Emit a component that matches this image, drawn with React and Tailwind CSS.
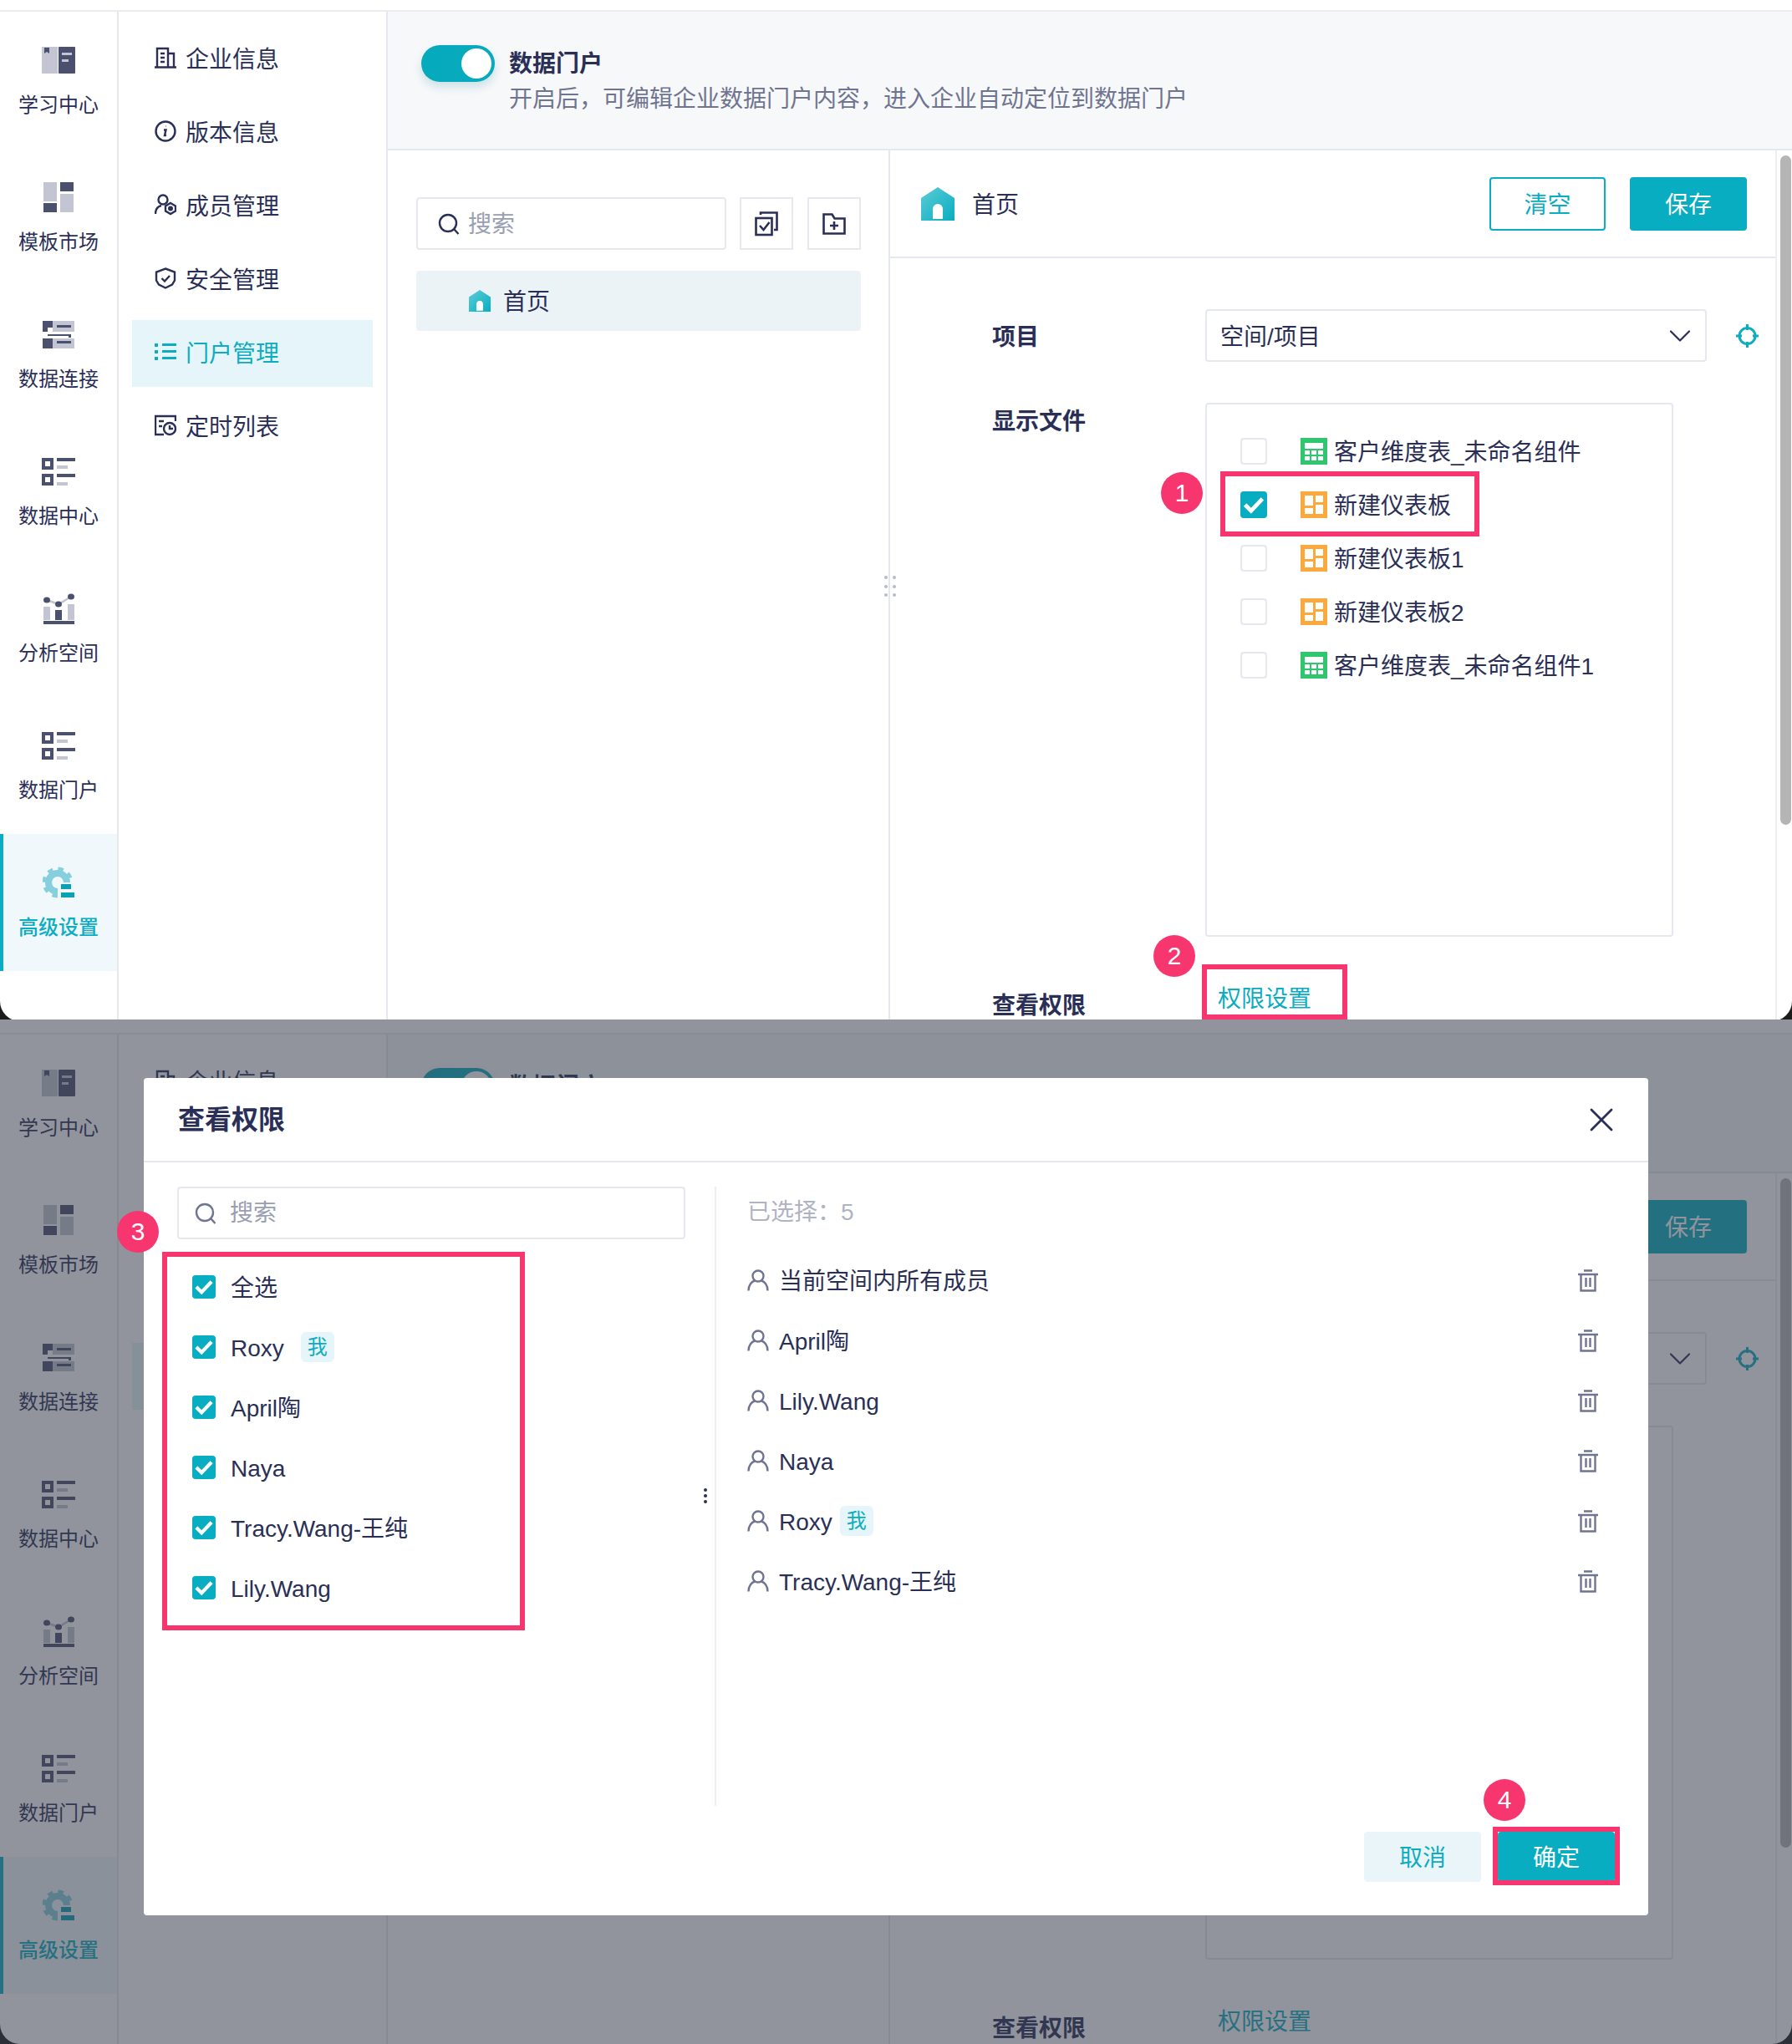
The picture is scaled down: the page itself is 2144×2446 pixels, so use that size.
import React from 'react';
import { ChevronDown, X } from 'lucide-react';

const DARK = '#4b506f';
const LIGHT = '#c3c6d2';
const INK = '#2a2f57';

const BookIcon = () => (
  <svg width="40" height="32" viewBox="0 0 40 32">
    <rect x="0" y="0" width="19" height="32" fill={LIGHT} />
    <path d="M3 1h6v7l-3-2-3 2z" fill={DARK} />
    <rect x="20" y="0" width="20" height="32" rx="1" fill={DARK} />
    <rect x="24" y="7" width="12" height="3" fill={LIGHT} />
    <rect x="24" y="15" width="8" height="3" fill={LIGHT} />
  </svg>
);

const TemplateIcon = () => (
  <svg width="36" height="36" viewBox="0 0 36 36">
    <rect x="0" y="0" width="16" height="23" fill={LIGHT} />
    <rect x="20" y="0" width="16" height="11" fill={DARK} />
    <rect x="0" y="25" width="16" height="11" fill={DARK} />
    <rect x="20" y="14" width="16" height="22" fill={LIGHT} />
  </svg>
);

const ConnectIcon = () => (
  <svg width="38" height="33" viewBox="0 0 38 33">
    <rect x="12" y="0" width="26" height="13" fill={LIGHT} />
    <rect x="12" y="21" width="26" height="12" fill={LIGHT} />
    <path d="M0 0h12v8H6v5H0zM0 21h12v12H0z" fill={DARK} />
    <rect x="17" y="5" width="17" height="3" fill={DARK} />
    <rect x="17" y="24" width="17" height="3" fill={DARK} />
    <path d="M6 16h28v4h-3v-2H6z" fill={DARK} />
  </svg>
);

const DataIcon = () => (
  <svg width="40" height="33" viewBox="0 0 40 33">
    <path fillRule="evenodd" d="M0 0h14v14H0zM4 4v6h6V4z" fill={DARK} />
    <path fillRule="evenodd" d="M0 19h14v14H0zM4 23v6h6v-6z" fill={DARK} />
    <rect x="18" y="0" width="22" height="4" fill={DARK} />
    <rect x="18" y="9" width="13" height="4" fill={LIGHT} />
    <rect x="18" y="19" width="22" height="4" fill={DARK} />
    <rect x="18" y="29" width="13" height="4" fill={LIGHT} />
  </svg>
);

const ChartIcon = () => (
  <svg width="37" height="37" viewBox="0 0 37 37">
    <rect x="0" y="16" width="8" height="16" fill={LIGHT} />
    <rect x="14" y="20" width="8" height="12" fill={DARK} />
    <rect x="29" y="13" width="8" height="19" fill={LIGHT} />
    <rect x="0" y="33" width="37" height="4" fill={DARK} />
    <path d="M4 8l14 5 15-9" stroke={LIGHT} strokeWidth="2.5" fill="none" />
    <ellipse cx="4" cy="8" rx="4" ry="3.5" fill={DARK} />
    <ellipse cx="18" cy="13" rx="4" ry="3.5" fill={DARK} />
    <ellipse cx="33" cy="4" rx="4" ry="3.5" fill={DARK} />
  </svg>
);

const GearIcon = ({ cut = '#f0f8fb' }) => (
  <svg width="38" height="38" viewBox="0 0 38 38">
    <circle cx="18" cy="19" r="11" stroke="#85d0dc" strokeWidth="8" fill="none" />
    <circle cx="18" cy="19" r="16.5" stroke="#85d0dc" strokeWidth="4" strokeDasharray="6.5 6.46" fill="none" />
    <rect x="18" y="19" width="20" height="19" fill={cut} />
    <rect x="22" y="21" width="12" height="6" fill="#0aa0b5" />
    <rect x="22" y="31" width="16" height="6" fill="#0aa0b5" />
  </svg>
);

const SvgBox = ({ children, color = INK }) => (
  <svg width="26" height="26" viewBox="0 0 26 26" fill="none" stroke={color} strokeWidth="2.4">
    {children}
  </svg>
);

const sideIcons = {
  company: (
    <SvgBox>
      <path d="M3 24V2h13v22M16 8h7v16M0 24.500h26M7 8h5M7 13h5M7 18h5" />
    </SvgBox>
  ),
  info: (
    <SvgBox>
      <circle cx="13" cy="13" r="11.5" />
      <path d="M11 11.5h2.5l-1.5 6.5h2M13.2 7h.4" strokeWidth="2.4" />
    </SvgBox>
  ),
  member: (
    <SvgBox>
      <circle cx="10" cy="7" r="5.5" />
      <path d="M1 24c0-6 3-9 7-10" />
      <path d="M19 11l6 3.500v6l-6 3.500-6-3.500v-6z" />
      <circle cx="19" cy="17.500" r="1.800" fill={INK} />
    </SvgBox>
  ),
  shield: (
    <SvgBox>
      <path d="M13 1.500l11 4v10l-3 5-8 4-8-4-3-5v-10z" />
      <path d="M8.500 13l3.500 3.500 6-6.500" />
    </SvgBox>
  ),
  list: (
    <svg width="26" height="22" viewBox="0 0 26 22" fill="#0cadc2">
      <rect x="0" y="1" width="4" height="4" />
      <rect x="0" y="9" width="4" height="4" />
      <rect x="0" y="17" width="4" height="4" />
      <rect x="9" y="1" width="17" height="3" />
      <rect x="9" y="9" width="17" height="3" />
      <rect x="9" y="17" width="17" height="3" />
    </svg>
  ),
  schedule: (
    <SvgBox>
      <path d="M11 24H1V2h24v6M5 8h6M5 14h4" />
      <circle cx="18" cy="17" r="7" />
      <path d="M18 13v4h4" />
    </SvgBox>
  ),
};

const navItems = [
  { label: '学习中心', icon: <BookIcon /> },
  { label: '模板市场', icon: <TemplateIcon /> },
  { label: '数据连接', icon: <ConnectIcon /> },
  { label: '数据中心', icon: <DataIcon /> },
  { label: '分析空间', icon: <ChartIcon /> },
  { label: '数据门户', icon: <DataIcon /> },
  { label: '高级设置', icon: <GearIcon />, active: true },
];

const sideItems = [
  { label: '企业信息', icon: 'company' },
  { label: '版本信息', icon: 'info' },
  { label: '成员管理', icon: 'member' },
  { label: '安全管理', icon: 'shield' },
  { label: '门户管理', icon: 'list', active: true },
  { label: '定时列表', icon: 'schedule' },
];

const files = [
  { name: '客户维度表_未命名组件', type: 'table' },
  { name: '新建仪表板', type: 'board', checked: true },
  { name: '新建仪表板1', type: 'board' },
  { name: '新建仪表板2', type: 'board' },
  { name: '客户维度表_未命名组件1', type: 'table' },
];

const members = ['Roxy', 'April陶', 'Naya', 'Tracy.Wang-王纯', 'Lily.Wang'];
const selected = ['当前空间内所有成员', 'April陶', 'Lily.Wang', 'Naya', 'Roxy', 'Tracy.Wang-王纯'];

const SearchIcon = ({ color = INK }) => (
  <svg width="26" height="26" viewBox="0 0 26 26" fill="none" stroke={color} strokeWidth="2.4">
    <circle cx="12" cy="12" r="10" />
    <path d="M19.500 19.500l5 5.500" />
  </svg>
);

const HouseIcon = ({ size }) => (
  <svg width={size} height={size} viewBox="0 0 40 40">
    <defs>
      <linearGradient id="house" x1="0" y1="0" x2="1" y2="1">
        <stop offset="0" stopColor="#5cccd6" />
        <stop offset="1" stopColor="#08adc1" />
      </linearGradient>
    </defs>
    <path d="M20 0l20 13v27H0V13z" fill="url(#house)" />
    <path d="M14 38V26a6 6 0 0 1 12 0v12z" fill="#fff" />
  </svg>
);

const TableIcon = () => (
  <svg width="32" height="32" viewBox="0 0 32 32">
    <rect width="32" height="32" fill="#2ec76f" />
    <rect x="5" y="6" width="22" height="7" fill="#fff" />
    <path d="M5 15h6v5H5zM13 15h6v5h-6zM21 15h6v5h-6zM5 22h6v5H5zM13 22h6v5h-6zM21 22h6v5h-6z" fill="#fff" />
  </svg>
);

const BoardIcon = () => (
  <svg width="32" height="32" viewBox="0 0 32 32">
    <rect width="32" height="32" fill="#fba93c" />
    <path d="M5 5h10v12H5zM18 5h9v8h-9zM5 20h10v7H5zM18 16h9v11h-9z" fill="#fff" />
  </svg>
);

const CheckMark = ({ size }) => (
  <svg width={size} height={size} viewBox="0 0 20 20" fill="none" stroke="#fff" strokeWidth="3">
    <path d="M3.500 10l4.500 4.500 8.500-9" />
  </svg>
);

const FileRow = ({ name, type, checked }) => (
  <div className="h-16 flex items-center pl-10">
    {checked ? (
      <span className="w-8 h-8 rounded bg-[#08adc1] flex items-center justify-center">
        <CheckMark size={32} />
      </span>
    ) : (
      <span className="w-8 h-8 rounded border-2 border-[#e6e8ef] bg-white" />
    )}
    <span className="ml-10 mr-2">{type === 'table' ? <TableIcon /> : <BoardIcon />}</span>
    <span className="mt-[3px] text-[28px] leading-10 text-[#2a2f57]">{name}</span>
  </div>
);

// the app behind both shots
const AppShell = () => (
  <div className="h-[1222px] flex flex-col bg-white rounded-b-[24px] overflow-hidden">
    <div className="h-[14px] shrink-0 border-b-2 border-[#ebecf0]" />
    <div className="flex flex-1 min-h-0">
      {/* Main nav */}
      <div className="w-[142px] shrink-0 border-r-2 border-[#e6e8ef]">
        {navItems.map((item) => (
          <div
            key={item.label}
            className={
              item.active
                ? 'h-[164px] pt-[36px] pr-1 flex flex-col items-center bg-[#f0f8fb] border-l-4 border-[#0cadc2]'
                : 'h-[164px] pt-[36px] flex flex-col items-center'
            }
          >
            <div className="h-11 flex items-center justify-center">{item.icon}</div>
            <div
              className={
                item.active
                  ? 'mt-4 text-2xl leading-8 font-medium text-[#0cadc2]'
                  : 'mt-4 text-2xl leading-8 text-[#2a2f57]'
              }
            >
              {item.label}
            </div>
          </div>
        ))}
      </div>

      {/* Settings menu */}
      <div className="w-[322px] shrink-0 border-r-2 border-[#e6e8ef] pt-[17px] px-4 flex flex-col gap-2">
        {sideItems.map((item) => (
          <div
            key={item.label}
            className={
              item.active
                ? 'h-20 pl-[27px] flex items-center gap-[11px] bg-[#e6f5f9] text-[#0cadc2]'
                : 'h-20 pl-[27px] flex items-center gap-[11px] text-[#2a2f57]'
            }
          >
            <span className="w-[26px] mb-1 flex justify-center">{sideIcons[item.icon]}</span>
            <span className="mt-0.5 text-[28px] leading-10">{item.label}</span>
          </div>
        ))}
      </div>

      <div className="flex-1 min-w-0 flex flex-col">
        {/* Portal switch */}
        <div className="h-[166px] shrink-0 bg-[#f7f8fa] border-b-2 border-[#e6e8ef] pl-10 pt-10 flex items-start gap-[17px]">
          <div className="w-[88px] h-11 rounded-full bg-gradient-to-r from-[#05aabd] to-[#0aa9bd] flex items-center justify-end pr-1 shadow-[0_6px_12px_rgba(8,120,140,0.18)]">
            <span className="w-9 h-9 rounded-full bg-white" />
          </div>
          <div className="pt-[3px]">
            <div className="text-[28px] leading-10 font-bold text-[#2a2f57]">数据门户</div>
            <div className="mt-0.5 text-[28px] leading-10 text-[#6f7590]">
              开启后，可编辑企业数据门户内容，进入企业自动定位到数据门户
            </div>
          </div>
        </div>

        <div className="flex flex-1 min-h-0">
          {/* Page tree */}
          <div className="w-[601px] shrink-0 border-r-2 border-[#e6e8ef] pl-[34px] pt-[56px]">
            <div className="flex">
              <div className="w-[371px] h-[63px] rounded border-2 border-[#e6e8ef] flex items-center pl-6 gap-[10px]">
                <SearchIcon />
                <span className="mt-0.5 text-[28px] leading-10 text-[#9a9eb3]">搜索</span>
              </div>
              <div className="ml-4 w-16 h-[63px] border-2 border-[#e6e8ef] flex items-center justify-center">
                <svg width="28" height="30" viewBox="0 0 28 30" fill="none" stroke={INK} strokeWidth="2.6">
                  <rect x="1.500" y="8" width="19" height="20" />
                  <path d="M7 4V1.500h19.500V22H23" />
                  <path d="M6 17l4.500 5 7-9" />
                </svg>
              </div>
              <div className="ml-[17px] w-16 h-[63px] border-2 border-[#e6e8ef] flex items-center justify-center">
                <svg width="28" height="26" viewBox="0 0 28 26" fill="none" stroke={INK} strokeWidth="2.6">
                  <path d="M1.500 24.500V1.500h10l3 5h12v18z" />
                  <path d="M14 10v10M9 15h10" />
                </svg>
              </div>
            </div>
            <div className="mt-[25px] w-[532px] h-[72px] rounded bg-[#ecf3f7] pl-[63px] flex items-center gap-[15px]">
              <HouseIcon size={26} />
              <span className="mt-[3px] text-[28px] leading-10 text-[#2a2f57]">首页</span>
            </div>
          </div>

          {/* Page settings */}
          <div className="flex-1 min-w-0 flex flex-col">
            <div className="h-[129px] shrink-0 border-b-2 border-[#e6e8ef] pl-[37px] pr-[34px] flex items-center">
              <HouseIcon size={40} />
              <span className="ml-[21px] mt-1 text-[28px] leading-10 text-[#2a2f57]">首页</span>
              <button className="ml-auto w-[139px] h-16 pt-1 rounded border-2 border-[#08adc1] text-[28px] text-[#0cadc2]">清空</button>
              <button className="ml-[29px] w-[140px] h-16 pt-1 rounded bg-[#08adc1] text-[28px] text-white">保存</button>
            </div>
            <div className="pl-[122px] pt-[61px]">
              <div className="flex items-center h-[63px]">
                <div className="w-[255px] mt-1 text-[28px] leading-10 font-bold text-[#2a2f57]">项目</div>
                <div className="w-[600px] h-[63px] rounded border-2 border-[#e6e8ef] pl-4 pr-2 flex items-center justify-between">
                  <span className="mt-1 text-[28px] leading-10 text-[#2a2f57]">空间/项目</span>
                  <ChevronDown size={44} strokeWidth={1.2} color={INK} />
                </div>
                <svg className="ml-[35px]" width="27" height="28" viewBox="0 0 27 28" fill="none" stroke="#0cadc2" strokeWidth="3">
                  <circle cx="13.500" cy="14" r="9.500" />
                  <path d="M13.500 0v7M13.500 21v7M0 14h7M20 14h7" />
                </svg>
              </div>
              <div className="flex mt-[49px]">
                <div className="w-[255px] pt-[3px] text-[28px] leading-10 font-bold text-[#2a2f57]">显示文件</div>
                <div className="w-[560px] h-[639px] rounded border-2 border-[#e6e8ef] pt-6">
                  {files.map((file) => (
                    <FileRow key={file.name} {...file} />
                  ))}
                </div>
              </div>
              <div className="flex mt-[63px]">
                <div className="w-[255px] text-[28px] leading-10 font-bold text-[#2a2f57]">查看权限</div>
                <div className="pl-[15px] -mt-2 text-[28px] leading-10 text-[#0cadc2]">权限设置</div>
              </div>
            </div>
          </div>

          {/* Scrollbar */}
          <div className="w-5 shrink-0 border-l-2 border-[#eeeff3] pl-1 pt-1.5">
            <div className="w-[13px] h-[801px] rounded-full bg-[#b5b5b5]" />
          </div>
        </div>
      </div>
    </div>

    {/* Pane resize handle */}
    <div className="absolute left-[1058px] top-[689px] w-[14px] h-7 grid grid-cols-2 gap-y-1 gap-x-1.5">
      {[0, 1, 2, 3, 4, 5].map((n) => (
        <span key={n} className="w-1 h-1 rounded-full bg-[#b8bbc9]" />
      ))}
    </div>
  </div>
);

const Badge = ({ n, className }) => (
  <div className={`absolute w-[50px] h-[50px] rounded-full bg-[#f7366f] text-white text-[30px] leading-[50px] text-center font-medium ${className}`}>
    {n}
  </div>
);

const Tag = () => (
  <span className="w-10 h-9 rounded-md bg-[#e6f5f9] text-2xl leading-9 text-center text-[#0cadc2]">我</span>
);

const PermissionModal = () => (
  <div className="absolute left-[172px] top-[70px] w-[1800px] h-[1002px] rounded bg-white flex flex-col">
    <div className="h-[101px] shrink-0 border-b-2 border-[#e6e8ef] pl-[41px] pr-8 flex items-center justify-between">
      <span className="text-[32px] leading-10 font-bold text-[#2a2f57]">查看权限</span>
      <X size={48} strokeWidth={1.4} color={INK} />
    </div>

    <div className="flex h-[741px] mt-[29px] shrink-0">
      <div className="w-[683px] shrink-0 pl-10 relative">
        <div className="w-[608px] h-[63px] rounded border-2 border-[#e6e8ef] flex items-center pl-[19px] gap-4">
          <SearchIcon color="#6f7590" />
          <span className="text-[28px] leading-10 text-[#9a9eb3]">搜索</span>
        </div>
        <div className="mt-[21px] pl-[18px]">
          <div className="h-[72px] flex items-center gap-[18px]">
            <span className="w-7 h-7 rounded bg-[#08adc1] flex items-center justify-center"><CheckMark size={28} /></span>
            <span className="mt-[3px] text-[28px] leading-10 text-[#2a2f57]">全选</span>
          </div>
          {members.map((name) => (
            <div key={name} className="h-[72px] flex items-center gap-[18px]">
              <span className="w-7 h-7 rounded bg-[#08adc1] flex items-center justify-center"><CheckMark size={28} /></span>
              <span className="mt-[3px] text-[28px] leading-10 text-[#2a2f57]">{name}</span>
              {name === 'Roxy' && <span className="ml-0.5 flex"><Tag /></span>}
            </div>
          ))}
        </div>
        <div className="absolute left-[670px] top-[361px] flex flex-col gap-[3px]">
          <span className="w-1 h-1 rounded-full bg-[#2a2f57]" />
          <span className="w-1 h-1 rounded-full bg-[#2a2f57]" />
          <span className="w-1 h-1 rounded-full bg-[#2a2f57]" />
        </div>
      </div>

      <div className="flex-1 min-w-0 border-l-2 border-[#eeeff3] pl-[37px] pr-[60px] pt-[11px]">
        <div className="text-[28px] leading-10 text-[#b0b3c3]">已选择：5</div>
        <div className="mt-[25px]">
          {selected.map((name) => (
            <div key={name} className="h-[72px] flex items-center">
              <svg className="mr-3" width="26" height="26" viewBox="0 0 26 26" fill="none" stroke="#6f7590" strokeWidth="2.4">
                <circle cx="13" cy="8" r="6.500" />
                <path d="M1.500 25.500c0-7 4-11 7.500-12M24.500 25.500c0-7-4-11-7.500-12" />
              </svg>
              <span className="mt-[3px] text-[28px] leading-10 text-[#2a2f57]">{name}</span>
              {name === 'Roxy' && <span className="ml-[9px] flex"><Tag /></span>}
              <svg className="ml-auto" width="24" height="27" viewBox="0 0 24 27" fill="none" stroke="#6f7590" strokeWidth="2.4">
                <path d="M0 6h24M7 1.500h10M3.500 6v19.500h17V6M9.500 10v11M14.500 10v11" />
              </svg>
            </div>
          ))}
        </div>
      </div>
    </div>

    <div className="flex justify-end gap-5 pr-10 pt-[31px]">
      <button className="w-[140px] h-[60px] pt-1 rounded bg-[#e9f5f8] text-[28px] text-[#0cadc2]">取消</button>
      <button className="w-[140px] h-[60px] pt-1 rounded bg-[#08adc1] text-[28px] text-white">确定</button>
    </div>
  </div>
);

const App = () => (
  <div className="w-[2144px] h-[2446px] overflow-hidden bg-[#1c1c1c] font-['Liberation_Sans','Noto_Sans_CJK_SC',sans-serif]">
    {/* Step 1 and 2 */}
    <div className="relative h-[1220px] overflow-hidden">
      <AppShell />
      <div className="absolute left-[1460px] top-[564px] w-[310px] h-[78px] border-[6px] border-[#f7366f]" />
      <Badge n="1" className="left-[1389px] top-[565px]" />
      <div className="absolute left-[1438px] top-[1154px] w-[174px] h-[66px] border-[6px] border-[#f7366f]" />
      <Badge n="2" className="left-[1380px] top-[1119px]" />
    </div>

    {/* Step 3 and 4 */}
    <div className="relative h-[1226px] overflow-hidden">
      <div className="h-1 bg-white" />
      <div className="relative">
        <AppShell />
      </div>
      <div className="absolute inset-0 bg-[rgba(58,62,78,0.555)]" />
      <PermissionModal />
      <div className="absolute left-[194px] top-[278px] w-[434px] h-[453px] border-[6px] border-[#f7366f]" />
      <Badge n="3" className="left-[140px] top-[229px]" />
      <div className="absolute left-[1786px] top-[966px] w-[152px] h-[70px] border-[6px] border-[#f7366f]" />
      <Badge n="4" className="left-[1775px] top-[909px]" />
    </div>
  </div>
);

export default App;
